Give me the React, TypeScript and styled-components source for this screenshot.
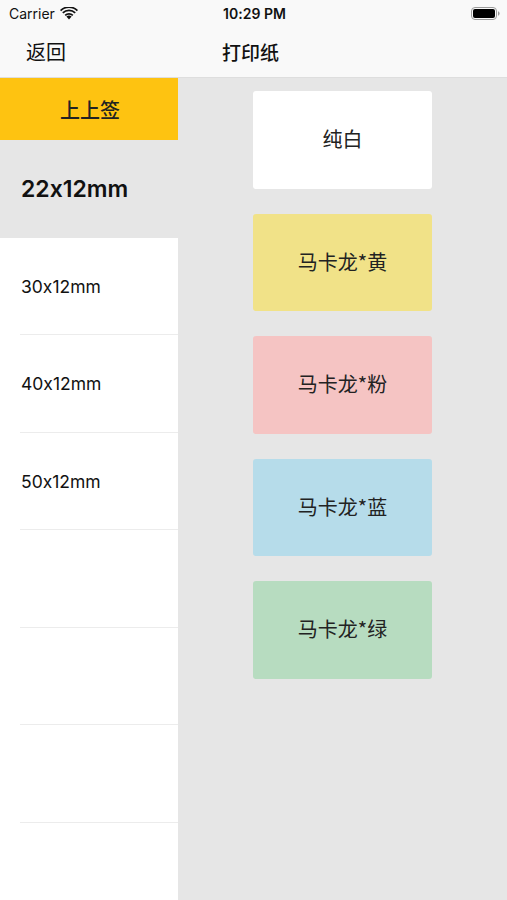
import React from "react";
import styled, { createGlobalStyle } from "styled-components";

const Global = createGlobalStyle`
  html, body { margin: 0; padding: 0; }
  body {
    width: 507px;
    height: 900px;
    overflow: hidden;
    font-family: Inter, "Noto Sans CJK SC", sans-serif;
    font-feature-settings: "calt" 0;
    color: #111;
    background: #e6e6e6;
  }
`;

const Screen = styled.div`
  width: 507px;
  height: 900px;
  display: flex;
  flex-direction: column;
  background: #e6e6e6;
`;

const Header = styled.div`
  background: #f9f9f9;
  border-bottom: 1px solid #dedede;
  display: flex;
  flex-direction: column;
  height: 77px;
  flex-shrink: 0;
`;

const StatusBar = styled.div`
  height: 26px;
  display: grid;
  grid-template-columns: 1fr auto 1fr;
  align-items: center;
  padding: 0 7px 0 9px;
  font-size: 14px;
`;

const Carrier = styled.div`
  display: flex;
  align-items: center;
  gap: 5px;
  color: #111;
`;

const Time = styled.div`
  font-weight: 600;
  font-size: 14px;
`;

const BatteryWrap = styled.div`
  justify-self: end;
  display: flex;
  align-items: center;
`;

const NavBar = styled.div`
  flex: 1;
  display: flex;
  align-items: center;
`;

const Back = styled.div`
  font-family: "Noto Sans CJK SC", sans-serif;
  font-size: 20px;
  padding-left: 26px;
  color: #111;
`;

const Title = styled.div`
  font-family: "Noto Sans CJK SC", sans-serif;
  font-size: 19px;
  font-weight: 500;
  margin-left: 156px;
  color: #111;
`;

const Body = styled.div`
  flex: 1;
  display: flex;
  min-height: 0;
  overflow: hidden;
`;

const Side = styled.div`
  width: 178px;
  flex-shrink: 0;
  background: #fff;
  display: flex;
  flex-direction: column;
  overflow: hidden;
`;

const Brand = styled.div`
  height: 62px;
  flex-shrink: 0;
  background: #fec311;
  display: flex;
  align-items: center;
  justify-content: center;
  font-family: "Noto Sans CJK SC", sans-serif;
  font-size: 20px;
  font-weight: 500;
  padding-left: 2px;
  color: #222;
`;

const SizeRow = styled.div<{ $active?: boolean }>`
  height: 97.5px;
  flex-shrink: 0;
  display: flex;
  align-items: center;
  padding-left: 21px;
  box-sizing: border-box;
  background: ${(p) => (p.$active ? "#e6e6e6" : "#fff")};
  font-size: ${(p) => (p.$active ? "23px" : "17.5px")};
  font-weight: ${(p) => (p.$active ? 600 : 400)};
  color: #111;
  position: relative;
  &::after {
    content: "";
    position: absolute;
    left: 20px;
    right: 0;
    bottom: 0;
    height: 1px;
    background: ${(p) => (p.$active ? "transparent" : "#ececec")};
  }
`;

const Panel = styled.div`
  flex: 1;
  background: #e6e6e6;
  display: flex;
  flex-direction: column;
  align-items: center;
  padding-top: 13px;
  gap: 25px;
`;

const Card = styled.div<{ $bg: string }>`
  width: 179px;
  height: 97.5px;
  flex-shrink: 0;
  background: ${(p) => p.$bg};
  border-radius: 3px;
  display: flex;
  align-items: center;
  justify-content: center;
  font-family: "Noto Sans CJK SC", sans-serif;
  font-size: 20px;
  color: #222;
  padding-bottom: 2px;
  box-sizing: border-box;
`;

const Wifi = () => (
  <svg width="18" height="13" viewBox="0 0 18 13">
    <path d="M9 12.5 L6.4 9.6 A3.8 3.8 0 0 1 11.6 9.6 Z" fill="#111" />
    <path d="M4.6 7.7 A6.4 6.4 0 0 1 13.4 7.7 L12.2 9 A4.6 4.6 0 0 0 5.8 9 Z" fill="#111" />
    <path d="M2.2 5.3 A9.8 9.8 0 0 1 15.8 5.3 L14.6 6.6 A8 8 0 0 0 3.4 6.6 Z" fill="#111" />
    <path d="M0 2.9 A13 13 0 0 1 18 2.9 L16.8 4.2 A11.2 11.2 0 0 0 1.2 4.2 Z" fill="#111" />
  </svg>
);

const Battery = () => (
  <svg width="29" height="13" viewBox="0 0 29 13">
    <rect x="0.5" y="0.5" width="25" height="12" rx="3.5" fill="none" stroke="#9a9a9a" />
    <rect x="2" y="2" width="22" height="9" rx="2" fill="#000" />
    <path d="M27 4.3 Q28.6 4.6 28.6 6.5 Q28.6 8.4 27 8.7 Z" fill="#9a9a9a" />
  </svg>
);

const sizes = ["22x12mm", "30x12mm", "40x12mm", "50x12mm", "", "", "", ""];

const papers = [
  { name: "纯白", bg: "#ffffff" },
  { name: "马卡龙*黄", bg: "#f1e288" },
  { name: "马卡龙*粉", bg: "#f5c4c3" },
  { name: "马卡龙*蓝", bg: "#b6dcea" },
  { name: "马卡龙*绿", bg: "#b7dcc0" },
];

export default function App() {
  return (
    <>
      <Global />
      <Screen>
        <Header>
          <StatusBar>
            <Carrier>
              Carrier <Wifi />
            </Carrier>
            <Time>10:29 PM</Time>
            <BatteryWrap>
              <Battery />
            </BatteryWrap>
          </StatusBar>
          <NavBar>
            <Back>返回</Back>
            <Title>打印纸</Title>
          </NavBar>
        </Header>
        <Body>
          <Side>
            <Brand>上上签</Brand>
            {sizes.map((s, i) => (
              <SizeRow key={i} $active={i === 0}>
                {s}
              </SizeRow>
            ))}
          </Side>
          <Panel>
            {papers.map((p) => (
              <Card key={p.name} $bg={p.bg}>
                {p.name}
              </Card>
            ))}
          </Panel>
        </Body>
      </Screen>
    </>
  );
}
